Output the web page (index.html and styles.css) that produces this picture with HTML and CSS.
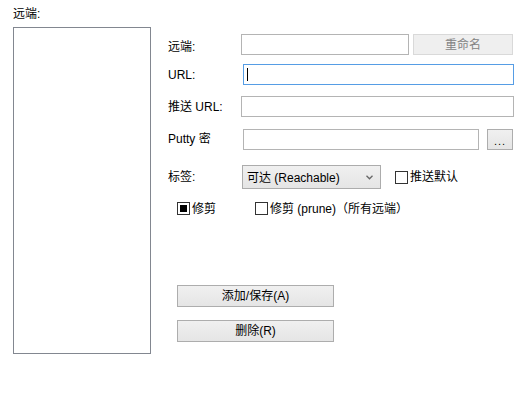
FILE: index.html
```html
<!DOCTYPE html>
<html lang="zh">
<head>
<meta charset="utf-8">
<link rel="stylesheet" href="styles.css">
</head>
<body>
<div class="page">
  <div class="left">
    <div class="title">远端:</div>
    <div class="listbox"></div>
  </div>
  <div class="right">
    <div class="row r1">
      <span class="lbl w73 down">远端:</span>
      <span class="input w168"></span>
      <span class="btn rename">重命名</span>
    </div>
    <div class="row r2">
      <span class="lbl w75">URL:</span>
      <span class="input focus w271"><span class="caret"></span></span>
    </div>
    <div class="row r3">
      <span class="lbl w73">推送 URL:</span>
      <span class="input w273"></span>
    </div>
    <div class="row r4">
      <span class="lbl w75 up">Putty 密</span>
      <span class="input w236"></span>
      <span class="btn dots">...</span>
    </div>
    <div class="row r5">
      <span class="lbl w74">标签:</span>
      <span class="select">可达 (Reachable)<svg class="arrow" width="7" height="5" viewBox="0 0 7 5"><path d="M0.5 0.8 L3.5 3.8 L6.5 0.8" fill="none" stroke="#666" stroke-width="1.3"/></svg></span>
      <span class="check c-push"><span class="box"></span>推送默认</span>
    </div>
    <div class="row r6">
      <span class="check"><span class="box on"></span>修剪</span>
      <span class="check c-all"><span class="box"></span>修剪 (prune)（所有远端）</span>
    </div>
    <div class="btns">
      <span class="btn big">添加/保存(A)</span>
      <span class="btn big">删除(R)</span>
    </div>
  </div>
</div>
</body>
</html>
```
FILE: styles.css
```css
html, body {
  margin: 0;
  padding: 0;
  background: #fff;
}
body {
  width: 524px;
  height: 396px;
  overflow: hidden;
  font-family: "Liberation Sans", "Noto Sans CJK SC", sans-serif;
  font-size: 12px;
  line-height: 14px;
  color: #000;
}
.page {
  display: flex;
}
.left {
  padding-left: 13px;
  padding-top: 7px;
  display: flex;
  flex-direction: column;
}
.title {
  height: 14px;
  margin-bottom: 6px;
}
.listbox {
  width: 136px;
  height: 325px;
  border: 1px solid #828790;
}
.right {
  margin-left: 17px;
  padding-top: 34px;
  display: flex;
  flex-direction: column;
}
.row {
  display: flex;
  align-items: center;
}
.lbl {
  display: block;
  position: relative;
}
.lbl.down { top: 2px; }
.lbl.up { top: -1px; }
.w73 { width: 73px; }
.w74 { width: 74px; }
.w75 { width: 75px; }
.input {
  display: block;
  box-sizing: border-box;
  height: 21px;
  border: 1px solid #b4b4b4;
  background: #fff;
  position: relative;
}
.w168 { width: 168px; }
.w271 { width: 271px; }
.w273 { width: 273px; }
.w236 { width: 236px; }
.input.focus {
  border-color: #569de5;
}
.caret {
  position: absolute;
  left: 3px;
  top: 3px;
  width: 1px;
  height: 13px;
  background: #000;
}
.btn {
  display: flex;
  align-items: center;
  justify-content: center;
  box-sizing: border-box;
  border: 1px solid #adadad;
  background: linear-gradient(#f0f0f0, #e5e5e5);
}
.rename {
  margin-left: 4px;
  width: 100px;
  height: 21px;
  background: #efefef;
  border-color: #d9d9d9;
  color: #838383;
}
.dots {
  margin-left: 8px;
  width: 26px;
  height: 21px;
  font-size: 11px;
  letter-spacing: 1px;
  padding-top: 2px;
}
.r2 { margin-top: 9px; }
.r3 { margin-top: 11px; }
.r4 { margin-top: 12px; }
.r5 { margin-top: 15px; }
.r6 { margin-top: 13px; padding-left: 9px; }
.select {
  box-sizing: border-box;
  width: 139px;
  height: 24px;
  border: 1px solid #acacac;
  background: linear-gradient(#f0f0f0, #e5e5e5);
  display: flex;
  align-items: center;
  padding-left: 4px;
  padding-top: 1px;
  position: relative;
}
.arrow {
  position: absolute;
  right: 7px;
  top: 9px;
}
.check {
  display: flex;
  align-items: center;
  height: 13px;
}
.box {
  box-sizing: border-box;
  width: 13px;
  height: 13px;
  border: 1px solid #333;
  background: #fff;
  margin-right: 2px;
  display: flex;
  align-items: center;
  justify-content: center;
}
.box.on::after {
  content: "";
  width: 7px;
  height: 7px;
  background: #000;
}
.c-push { margin-left: 14px; }
.c-all { margin-left: 39px; }
.btns {
  margin-top: 70px;
  padding-left: 9px;
  display: flex;
  flex-direction: column;
  gap: 13px;
}
.big {
  width: 157px;
  height: 22px;
}
```
